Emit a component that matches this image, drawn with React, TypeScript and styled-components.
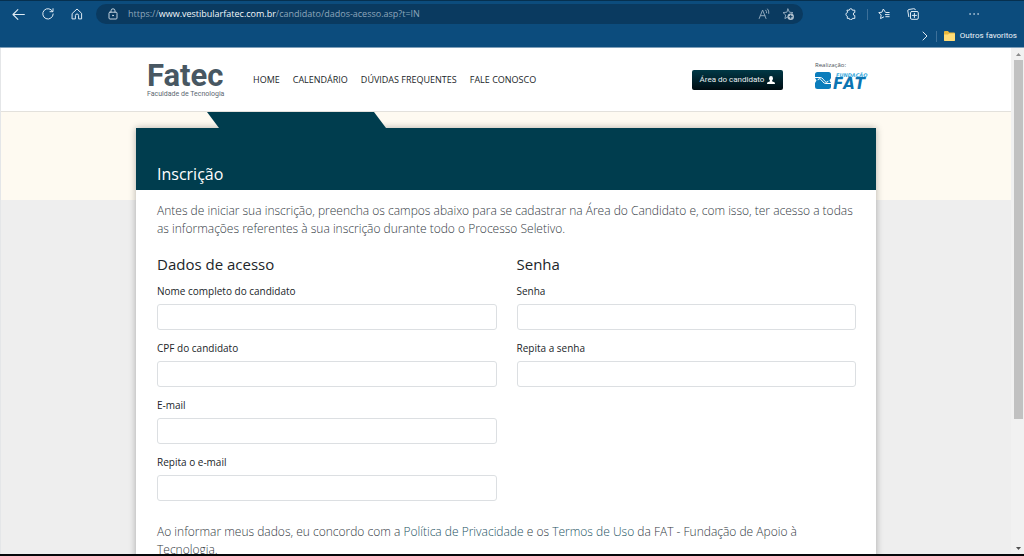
import React from "react";
import styled, { createGlobalStyle } from "styled-components";

const GlobalStyle = createGlobalStyle`
  * { box-sizing: border-box; }
  html, body { margin: 0; padding: 0; }
  body {
    font-family: "Open Sans", "Noto Sans", sans-serif;
    font-size: 12px;
    color: #212529;
    overflow: hidden;
  }
  button, input { font: inherit; }
`;

const Shell = styled.div`
  display: flex;
  flex-direction: column;
  height: 100vh;
  border-bottom: 2px solid #05070a;
`;

/* Browser chrome */
const Chrome = styled.div`
  flex: none;
  background: #0c4c7d;
  border-top: 1px solid #06304f;
  border-bottom: 1px solid #7f9fb9;
  color: #dfeaf3;
`;

const Toolbar = styled.div`
  display: flex;
  align-items: center;
  height: 26px;
  padding: 0 44px 0 12px;
`;

const IconButton = styled.button<{ $gap?: number }>`
  display: flex;
  flex: none;
  padding: 0;
  margin-right: ${(p) => p.$gap ?? 0}px;
  border: 0;
  background: none;
  color: inherit;
`;

const AddressBar = styled.div`
  display: flex;
  flex: 1;
  align-items: center;
  height: 20px;
  margin-right: 42px;
  padding: 0 9px 0 11px;
  border-radius: 10px;
  background: #0a3a60;
  color: #8da6bb;
`;

const Url = styled.div`
  flex: 1;
  margin-left: 9px;
  font-size: 9px;
  line-height: 12px;
  white-space: nowrap;
  b { font-weight: 400; color: #f4f8fb; }
`;

const Divider = styled.span<{ $gap: number }>`
  flex: none;
  width: 1px;
  height: 11px;
  margin-right: ${(p) => p.$gap}px;
  background: #3d7099;
`;

const Favorites = styled.div`
  display: flex;
  align-items: center;
  justify-content: flex-end;
  height: 20px;
  padding: 0 7px 2px 0;
`;

const FolderLink = styled.a`
  display: flex;
  align-items: center;
  gap: 5px;
  color: #eef4f9;
  font-family: Roboto, sans-serif;
  font-size: 8px;
  line-height: 12px;
  text-decoration: none;
`;

/* Web page */
const Viewport = styled.div`
  display: flex;
  flex: 1;
  min-height: 0;
  border-left: 1px solid #e4e6e8;
  background: #eeeeee;
`;

const Page = styled.div`
  flex: 1;
  min-width: 0;
  overflow: hidden;
`;

const Header = styled.header`
  display: flex;
  justify-content: center;
  height: 64px;
  border-bottom: 1px solid #e3e1dc;
  background: #ffffff;
`;

const HeaderInner = styled.div`
  display: flex;
  align-items: center;
  width: 100%;
  max-width: 740px;
  padding: 0 7px 0 11px;
`;

const Logo = styled.a`
  display: block;
  width: 106px;
  color: #485762;
  font-family: Roboto, sans-serif;
  text-decoration: none;
`;

const LogoName = styled.span`
  display: block;
  font-size: 31px;
  font-weight: 700;
  line-height: 28px;
`;

const LogoTagline = styled.span`
  display: block;
  color: #5d6871;
  font-size: 7px;
  line-height: 8px;
  white-space: nowrap;
`;

const Nav = styled.nav`
  display: flex;
  flex: 1;
  gap: 13px;
  a {
    color: #212529;
    font-size: 9px;
    line-height: 12px;
    text-decoration: none;
    white-space: nowrap;
  }
`;

const AreaButton = styled.button`
  display: flex;
  align-items: center;
  justify-content: center;
  gap: 3px;
  width: 91px;
  height: 20px;
  margin-right: 32px;
  padding: 0;
  border: 0;
  border-radius: 2px;
  background: linear-gradient(#003846, #000c12);
  color: #e8eef0;
  font-family: Roboto, sans-serif;
  font-size: 8px;
  white-space: nowrap;
`;

const Sponsor = styled.div`
  display: flex;
  flex-direction: column;
  gap: 3px;
  width: 54px;
  padding-bottom: 8px;
  font-size: 6px;
  line-height: 8px;
  color: #495057;
`;

const SponsorLogo = styled.svg`
  display: block;
  width: 54px;
  height: 18px;
  overflow: visible;
  font-family: "DejaVu Sans", sans-serif;
  font-weight: 700;
  font-style: italic;
  font-kerning: none;
`;

const Main = styled.main`
  display: flex;
  flex-direction: column;
  align-items: center;
  background: linear-gradient(#fefaf1 0 88px, #eeeeee 88px);
`;

const Column = styled.div`
  width: 100%;
  max-width: 740px;
`;

const Tab = styled.div`
  width: 180px;
  height: 16px;
  margin-left: 71px;
  background: #003d4e;
  clip-path: polygon(0 0, 167px 0, 179px 100%, 12px 100%);
`;

const Card = styled.section`
  background: #ffffff;
  box-shadow: 0 0 7px rgba(0, 0, 0, 0.3);
`;

const CardTitle = styled.h1`
  height: 62px;
  margin: 0;
  padding: 35px 21px 0;
  background: #003d4e;
  color: #ffffff;
  font-size: 16px;
  font-weight: 400;
  line-height: 22px;
`;

const CardBody = styled.div`
  padding: 12px 20px 24px 21px;
`;

const Paragraph = styled.p`
  margin: 0;
  color: #343a3f;
  font-size: 12px;
  font-weight: 300;
  line-height: 18px;
  white-space: nowrap;
  a { color: #245363; text-decoration: none; }
`;

const FormGrid = styled.form`
  display: grid;
  grid-template-columns: 1fr 1fr;
  gap: 20px;
  margin: 16px 0 22px;
`;

const FieldSet = styled.div`
  display: flex;
  flex-direction: column;
`;

const GroupTitle = styled.h2`
  margin: 0 0 10px;
  font-size: 15px;
  font-weight: 400;
  line-height: 20px;
`;

const Field = styled.label`
  display: flex;
  flex-direction: column;
  gap: 6px;
  font-size: 10px;
  line-height: 14px;
  & + & { margin-top: 11px; }
`;

const Input = styled.input`
  width: 100%;
  height: 26px;
  padding: 0 8px;
  border: 1px solid #dcdfe2;
  border-radius: 3px;
  background: #ffffff;
`;

const Scrollbar = styled.div`
  display: flex;
  flex: none;
  flex-direction: column;
  align-items: center;
  width: 13px;
  padding-left: 2px;
  background: #f1f1f1;
`;

const Thumb = styled.div`
  width: 9px;
  height: 71%;
  background: #c1c1c1;
`;

const Spacer = styled.div`
  flex: 1;
`;

const ScrollArrow = styled.svg`
  flex: none;
  width: 11px;
  height: 12px;
`;

const Line = ({ size = 12, children }: { size?: number; children: React.ReactNode }) => (
  <svg width={size} height={size} viewBox="0 0 12 12" fill="none" stroke="currentColor" strokeWidth="1" strokeLinecap="round" strokeLinejoin="round">
    {children}
  </svg>
);

const star = "M6 1 L7.4 4.2 L11 4.6 L8.3 7 L9.1 10.6 L6 8.8 L2.9 10.6 L3.7 7 L1 4.6 L4.6 4.2 Z";

const TextField = ({ label, type = "text" }: { label: string; type?: string }) => (
  <Field>
    {label}
    <Input type={type} />
  </Field>
);

export default function App() {
  return (
    <>
      <GlobalStyle />
      <Shell>
        <Chrome>
          <Toolbar>
            <IconButton aria-label="Voltar" $gap={17}>
              <Line size={13}><path d="M11.4 6H1M5.4 1.5L.9 6l4.5 4.5" /></Line>
            </IconButton>
            <IconButton aria-label="Atualizar" $gap={17}>
              <Line><path d="M10.7 3.6A5.2 5.2 0 1 0 11.2 6M11 .7v3H8" /></Line>
            </IconButton>
            <IconButton aria-label="Início" $gap={13}>
              <Line><path d="M1.4 5.3L6 1l4.6 4.3v5.6H7.6V7.6a1.6 1.6 0 0 0-3.2 0v3.3h-3z" /></Line>
            </IconButton>
            <AddressBar>
              <IconButton aria-label="Segurança do site">
                <Line>
                  <rect x="2" y="4.2" width="8" height="6.8" rx="1" stroke="#c3d2de" />
                  <path d="M4 4V2.8a2 2 0 0 1 4 0V4" stroke="#c3d2de" />
                  <circle cx="6" cy="7.5" r=".5" fill="#c3d2de" stroke="#c3d2de" />
                </Line>
              </IconButton>
              <Url>https://<b>www.vestibularfatec.com.br</b>/candidato/dados-acesso.asp?t=IN</Url>
              <IconButton aria-label="Ler em voz alta" $gap={12}>
                <Line>
                  <path d="M1.2 10.5L4.6 2l3.4 8.5M2.3 7.7h4.6M7.8 2.2q1 1.1.8 2.6M9.6 1q1.7 1.8 1.2 4.4" />
                </Line>
              </IconButton>
              <IconButton aria-label="Adicionar aos favoritos">
                <Line>
                  <path d={star} />
                  <circle cx="8.7" cy="8.7" r="3.2" fill="#b4c3d0" stroke="none" />
                  <path d="M8.7 7.2v3M7.2 8.7h3" stroke="#0a3a60" />
                </Line>
              </IconButton>
            </AddressBar>
            <IconButton aria-label="Extensões" $gap={10}>
              <Line>
                <path d="M2.3 2.2h2a1.5 1.5 0 0 1 3 0h2.5v2.3a1.2 1.2 0 0 0 0 3v2.9H7.3a1.5 1.5 0 0 1-3 0h-2V8.2a2 2 0 0 1 0-3.8z" />
              </Line>
            </IconButton>
            <Divider $gap={10} />
            <IconButton aria-label="Favoritos" $gap={17}>
              <Line>
                <path d="M7 3.6L5.3 1 4 4.2 .8 4.6 3.2 7l-.7 3.6L5.6 9M7.8 4.5h3.4M7.4 6.6h3.8M7.8 8.7h3.4" />
              </Line>
            </IconButton>
            <IconButton aria-label="Coleções" $gap={49}>
              <Line>
                <rect x="3.5" y="3.5" width="7.8" height="7.8" rx="1.3" />
                <path d="M7.4 5.3v4.2M5.3 7.4h4.2M1.8 8.6L.8 3a1.3 1.3 0 0 1 1-1.5l5-.8a1.3 1.3 0 0 1 1.5 1" />
              </Line>
            </IconButton>
            <IconButton aria-label="Configurações e mais">
              <Line>
                <path d="M2 6h.2M6 6h.2M10 6h.2" strokeWidth="1.5" />
              </Line>
            </IconButton>
          </Toolbar>
          <Favorites>
            <IconButton aria-label="Mais favoritos" $gap={5}>
              <Line><path d="M4 2l4 4-4 4" /></Line>
            </IconButton>
            <Divider $gap={7} />
            <FolderLink href="#">
              <svg width="11" height="10" viewBox="0 0 11 10">
                <path d="M0 1a1 1 0 0 1 1-1h3l1.2 1.5H10a1 1 0 0 1 1 1V9a1 1 0 0 1-1 1H1a1 1 0 0 1-1-1z" fill="#e8b73c" />
                <path d="M0 3.5h4l1.2-1H11V9a1 1 0 0 1-1 1H1a1 1 0 0 1-1-1z" fill="#ffdc77" />
              </svg>
              Outros favoritos
            </FolderLink>
          </Favorites>
        </Chrome>

        <Viewport>
          <Page>
            <Header>
              <HeaderInner>
                <Logo href="#">
                  <LogoName>Fatec</LogoName>
                  <LogoTagline>Faculdade de Tecnologia</LogoTagline>
                </Logo>
                <Nav>
                  <a href="#">HOME</a>
                  <a href="#">CALENDÁRIO</a>
                  <a href="#">DÚVIDAS FREQUENTES</a>
                  <a href="#">FALE CONOSCO</a>
                </Nav>
                <AreaButton>
                  Área do candidato
                  <svg width="8" height="8" viewBox="0 0 8 8" fill="#ffffff">
                    <ellipse cx="4" cy="2.4" rx="2" ry="2.4" />
                    <path d="M3 4h2v1.3l2.3.9Q8 6.5 8 8H0Q0 6.5.7 6.2L3 5.3z" />
                  </svg>
                </AreaButton>
                <Sponsor>
                  Realização:
                  <SponsorLogo viewBox="0 0 54 18" role="img" aria-label="Fundação FAT">
                    <path d="M2.5 0H13.5Q16 0 16 2.5V6L14.5 8.500 16 11V15Q16 17 13.5 17H2.5Q0 17 0 14.5V11L1.5 8.500 0 6V2.5Q0 0 2.5 0Z" fill="#0b7dbc" />
                    <path d="M0 5.5H5Q7 5.5 8.200 7.200T11 10.300Q13 10.500 13 8.800M16 11.500H11Q9 11.500 7.800 9.800T5 6.700Q3 6.500 3 8.200" fill="none" stroke="#ffffff" strokeWidth="1" />
                    <text x="21" y="5" fontSize="5" fill="#39a9dc">FUNDAÇÃO</text>
                    <text x="18" y="17" fontSize="15" fill="#0b74b2">FAT</text>
                  </SponsorLogo>
                </Sponsor>
              </HeaderInner>
            </Header>

            <Main>
              <Column>
                <Tab />
                <Card>
                  <CardTitle>Inscrição</CardTitle>
                  <CardBody>
                    <Paragraph>
                      Antes de iniciar sua inscrição, preencha os campos abaixo para se cadastrar na Área do Candidato e, com isso, ter acesso a todas
                      <br />
                      as informações referentes à sua inscrição durante todo o Processo Seletivo.
                    </Paragraph>
                    <FormGrid>
                      <FieldSet>
                        <GroupTitle>Dados de acesso</GroupTitle>
                        <TextField label="Nome completo do candidato" />
                        <TextField label="CPF do candidato" />
                        <TextField label="E-mail" type="email" />
                        <TextField label="Repita o e-mail" type="email" />
                      </FieldSet>
                      <FieldSet>
                        <GroupTitle>Senha</GroupTitle>
                        <TextField label="Senha" type="password" />
                        <TextField label="Repita a senha" type="password" />
                      </FieldSet>
                    </FormGrid>
                    <Paragraph>
                      Ao informar meus dados, eu concordo com a <a href="#">Política de Privacidade</a> e os <a href="#">Termos de Uso</a> da FAT - Fundação de Apoio à
                      <br />
                      Tecnologia.
                    </Paragraph>
                  </CardBody>
                </Card>
              </Column>
            </Main>
          </Page>
          <Scrollbar aria-hidden="true">
            <ScrollArrow viewBox="0 0 11 12"><path d="M3 8l2.5-3L8 8z" fill="#8b8b8b" /></ScrollArrow>
            <Thumb />
            <Spacer />
            <ScrollArrow viewBox="0 0 11 12"><path d="M3 5l2.5 3L8 5z" fill="#505050" /></ScrollArrow>
          </Scrollbar>
        </Viewport>
      </Shell>
    </>
  );
}
